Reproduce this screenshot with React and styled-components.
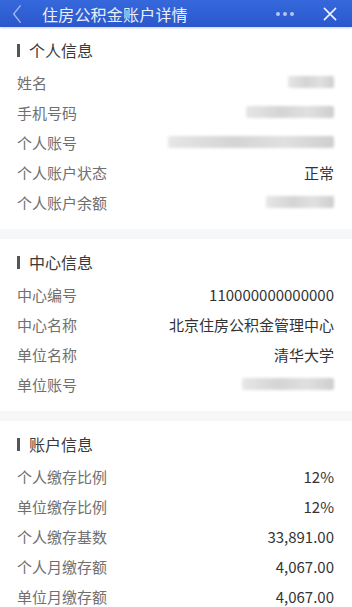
import React from "react";
import styled, { createGlobalStyle } from "styled-components";

const GlobalStyle = createGlobalStyle`
  html, body {
    margin: 0;
    padding: 0;
    background: #ffffff;
    font-family: "Noto Sans CJK SC", "Noto Sans", sans-serif;
  }
`;

const sections = [
  {
    title: "个人信息",
    rows: [
      { label: "姓名", blur: 46 },
      { label: "手机号码", blur: 88 },
      { label: "个人账号", blur: 166 },
      { label: "个人账户状态", value: "正常" },
      { label: "个人账户余额", blur: 68 },
    ],
  },
  {
    title: "中心信息",
    rows: [
      { label: "中心编号", value: "110000000000000" },
      { label: "中心名称", value: "北京住房公积金管理中心" },
      { label: "单位名称", value: "清华大学" },
      { label: "单位账号", blur: 92 },
    ],
  },
  {
    title: "账户信息",
    rows: [
      { label: "个人缴存比例", value: "12%" },
      { label: "单位缴存比例", value: "12%" },
      { label: "个人缴存基数", value: "33,891.00" },
      { label: "个人月缴存额", value: "4,067.00" },
      { label: "单位月缴存额", value: "4,067.00" },
    ],
  },
];

export default function App() {
  return (
    <>
      <GlobalStyle />
      <Page>
        <TopBar>
          <BackIcon viewBox="0 0 14 24">
            <path d="M11 2 L3 12 L11 22" />
          </BackIcon>
          <Title>住房公积金账户详情</Title>
          <Dots>
            <span />
            <span />
            <span />
          </Dots>
          <CloseIcon viewBox="0 0 20 20">
            <path d="M3 3 L17 17 M17 3 L3 17" />
          </CloseIcon>
        </TopBar>
        {sections.map((section, i) => (
          <React.Fragment key={section.title}>
            {i > 0 && <Divider />}
            <Section>
              <SectionTitle>{section.title}</SectionTitle>
              {section.rows.map((row) => (
                <Row key={row.label}>
                  <Label>{row.label}</Label>
                  {row.value ? (
                    <Value>{row.value}</Value>
                  ) : (
                    <Blurred style={{ width: row.blur }} />
                  )}
                </Row>
              ))}
            </Section>
          </React.Fragment>
        ))}
      </Page>
    </>
  );
}

const Page = styled.div`
  width: 352px;
  height: 607px;
  overflow: hidden;
  background: #ffffff;
`;

const TopBar = styled.div`
  display: flex;
  align-items: center;
  height: 27px;
  padding: 0 14px 0 11px;
  background: linear-gradient(180deg, #3568dc 0%, #2a58cc 100%);
  box-shadow: 0 1px 2px rgba(30, 60, 140, 0.25);
`;

const BackIcon = styled.svg`
  width: 12px;
  height: 20px;
  fill: none;
  stroke: #9fb8f0;
  stroke-width: 1.6;
  stroke-linecap: round;
  stroke-linejoin: round;
`;

const Title = styled.div`
  flex: 1;
  margin-left: 19px;
  color: #e9eefb;
  font-size: 16px;
  letter-spacing: 0.2px;
`;

const Dots = styled.div`
  display: flex;
  gap: 3px;
  margin-right: 28px;
  span {
    width: 4px;
    height: 4px;
    border-radius: 50%;
    background: #b4c7f2;
  }
`;

const CloseIcon = styled.svg`
  width: 16px;
  height: 16px;
  fill: none;
  stroke: #eef3ff;
  stroke-width: 2;
  stroke-linecap: round;
`;

const Divider = styled.div`
  height: 10px;
  background: #f6f7f9;
`;

const Section = styled.div`
  display: flex;
  flex-direction: column;
  padding: 8px 18px 12px 17px;
`;

const SectionTitle = styled.div`
  display: flex;
  align-items: center;
  height: 30px;
  margin-bottom: 2px;
  color: #3a3a3a;
  font-size: 16px;
  &::before {
    content: "";
    width: 3px;
    height: 13px;
    margin-right: 9px;
    background: #555555;
  }
`;

const Row = styled.div`
  display: flex;
  align-items: center;
  justify-content: space-between;
  height: 30px;
  font-size: 15px;
`;

const Label = styled.span`
  color: #707070;
`;

const Value = styled.span`
  color: #333333;
`;

const Blurred = styled.span`
  height: 12px;
  border-radius: 2px;
  background: linear-gradient(90deg, #e6e6e6, #d4d4d4 40%, #e0e0e0 70%, #cecece);
  filter: blur(1.5px);
`;
